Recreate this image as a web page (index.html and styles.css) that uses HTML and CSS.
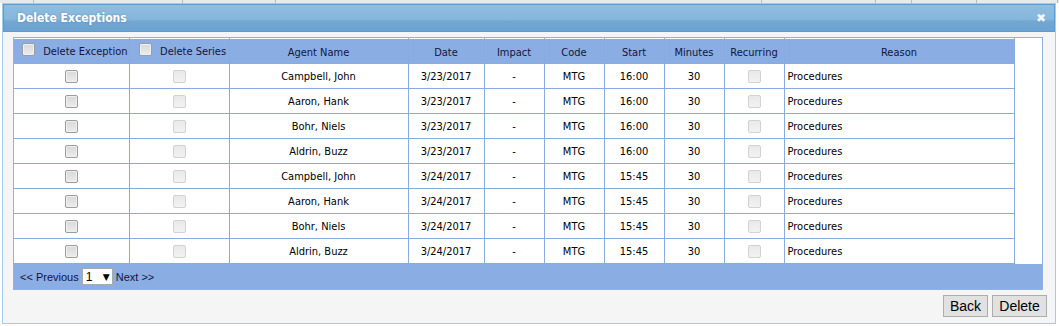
FILE: index.html
```html
<!DOCTYPE html>
<html>
<head>
    <meta charset="UTF-8">
    <title>Delete Exceptions</title>
    <link rel="stylesheet" href="styles.css">
</head>
<body>
    <!-- strip of the page that sits behind the dialog -->
    <div class="backdrop">
        <span style="width:33px"></span><span style="width:148px"></span><span style="width:92px"></span><span style="width:485px"></span><span style="width:113px"></span><span style="width:35px"></span><span style="width:64px"></span><span style="width:80px"></span>
    </div>

    <div class="dialog">
        <div class="titlebar">
            <span class="title">Delete Exceptions</span>
            <span class="close">&#10006;</span>
        </div>

        <div class="content">
            <div class="grid">
                <div class="grid-body">
                    <table class="exceptions">
                        <colgroup>
                            <col style="width:115px">
                            <col style="width:100px">
                            <col style="width:179px">
                            <col style="width:76px">
                            <col style="width:60px">
                            <col style="width:60px">
                            <col style="width:60px">
                            <col style="width:60px">
                            <col style="width:60px">
                            <col style="width:230px">
                        </colgroup>
                        <thead>
                            <tr>
                                <th class="with-check"><input type="checkbox" class="chk"> <span class="hdr-label">Delete Exception</span></th>
                                <th class="with-check"><input type="checkbox" class="chk"> <span class="hdr-label">Delete Series</span></th>
                                <th>Agent Name</th>
                                <th>Date</th>
                                <th>Impact</th>
                                <th>Code</th>
                                <th>Start</th>
                                <th>Minutes</th>
                                <th>Recurring</th>
                                <th>Reason</th>
                            </tr>
                        </thead>
                        <tbody id="rows"></tbody>
                    </table>
                </div>
                <div class="pager">
                    <span>&lt;&lt; Previous</span>
                    <span class="page-select">1 <span class="arrow">&#9660;</span></span>
                    <span>Next &gt;&gt;</span>
                </div>
            </div>

            <div class="actions">
                <button type="button" class="btn btn-back">Back</button>
                <button type="button" class="btn btn-delete">Delete</button>
            </div>
        </div>
    </div>

    <script>
        // rows of the exceptions table
        var rows = [
            ["Campbell, John", "3/23/2017", "16:00"],
            ["Aaron, Hank", "3/23/2017", "16:00"],
            ["Bohr, Niels", "3/23/2017", "16:00"],
            ["Aldrin, Buzz", "3/23/2017", "16:00"],
            ["Campbell, John", "3/24/2017", "15:45"],
            ["Aaron, Hank", "3/24/2017", "15:45"],
            ["Bohr, Niels", "3/24/2017", "15:45"],
            ["Aldrin, Buzz", "3/24/2017", "15:45"]
        ];
        var html = "";
        rows.forEach(function (r) {
            html += "<tr>" +
                "<td><input type='checkbox' class='chk'></td>" +
                "<td><input type='checkbox' class='chk' disabled></td>" +
                "<td>" + r[0] + "</td>" +
                "<td>" + r[1] + "</td>" +
                "<td>-</td>" +
                "<td>MTG</td>" +
                "<td>" + r[2] + "</td>" +
                "<td>30</td>" +
                "<td><input type='checkbox' class='chk' disabled></td>" +
                "<td class='reason'>Procedures</td>" +
                "</tr>";
        });
        document.getElementById("rows").innerHTML = html;
    </script>
</body>
</html>
```

FILE: styles.css
```css
/* page */
body {
    margin: 0;
    padding: 0;
    background-color: #ffffff;
    font-family: "DejaVu Sans Condensed", "Liberation Sans", sans-serif;
    font-size: 11px;
}

/* strip of the page behind the dialog */
.backdrop {
    display: flex;
    height: 3px;
    background-color: #e9e9e9;
}

.backdrop span {
    height: 3px;
    border-right: 1px solid #b9b9b9;
}

/* dialog frame */
.dialog {
    margin: 0 3px 0 2px;
    height: 319px;
    border: 1px solid #a4cbea;
    background-color: #f5f5f5;
    display: flex;
    flex-direction: column;
}

.titlebar {
    height: 26px;
    border: 1px solid #5b9dd2;
    background: linear-gradient(#8fbde0 0%, #86b6dc 55%, #72a8d2 62%, #6aa3cf 100%);
    display: flex;
    align-items: center;
    justify-content: space-between;
    padding: 0 8px 0 13px;
}

.title {
    color: #ffffff;
    font-weight: bold;
    font-size: 12px;
    text-shadow: 0 0 2px rgba(70, 110, 150, 0.6);
}

.close {
    color: #f4f8fc;
    font-size: 12px;
    font-weight: bold;
    font-family: "DejaVu Sans", sans-serif;
}

.content {
    padding: 5px 12px 0 10px;
}

/* grid with the table and the pager */
.grid {
    border: 1px solid #8db2e3;
    background-color: #ffffff;
}

.grid-body {
    background-color: #ffffff;
}

.exceptions {
    border-collapse: collapse;
    table-layout: fixed;
    width: 1000px;
    border-bottom: 1px solid #88acdf;
}

.exceptions th,
.exceptions td {
    border: 1px solid #88acdf;
    height: 24px;
    padding: 0;
    text-align: center;
    vertical-align: middle;
    white-space: nowrap;
}

.exceptions th:first-child,
.exceptions td:first-child {
    border-left: none;
}

.exceptions th {
    background-color: #8aade4;
    color: #14143a;
    font-weight: normal;
    border-top: 1px solid #ffffff;
    padding-top: 2px;
    height: 22px;
}

.exceptions th.with-check {
    padding-left: 7px;
}

.exceptions td {
    color: #000000;
}

.exceptions td.reason {
    text-align: left;
    padding-left: 3px;
}

.hdr-label {
    margin-left: 5px;
}

/* old style checkboxes */
.chk {
    -webkit-appearance: none;
    appearance: none;
    width: 13px;
    height: 13px;
    margin: 0;
    vertical-align: middle;
    border: 1px solid #9c9c9c;
    border-radius: 2px;
    background: linear-gradient(#d8d8d8, #ececec);
    box-shadow: inset 0 0 0 1px #f0f0f0;
}

.chk:disabled {
    border-color: #d2d2d2;
    background: linear-gradient(#e9e9e9, #f2f2f2);
    box-shadow: none;
}

th .chk {
    position: relative;
    top: -3px;
}

/* pager bar */
.pager {
    height: 25px;
    background-color: #8aade4;
    display: flex;
    align-items: center;
    gap: 3px;
    padding-left: 6px;
    font-family: "Liberation Sans", Arial, sans-serif;
    font-size: 11px;
    color: #14143a;
}

.page-select {
    display: inline-flex;
    align-items: center;
    justify-content: space-between;
    box-sizing: border-box;
    width: 31px;
    height: 17px;
    padding: 0 2px 0 3px;
    background-color: #ffffff;
    border: 1px solid #a9a9a9;
    color: #000000;
    font-size: 12px;
}

.page-select .arrow {
    font-size: 9px;
    font-family: "DejaVu Sans", sans-serif;
}

/* buttons */
.actions {
    display: flex;
    justify-content: flex-end;
    gap: 4px;
    margin-top: 5px;
    margin-right: -4px;
}

.btn {
    height: 22px;
    padding: 0;
    background-color: #e1e1e1;
    border: 1px solid #adadad;
    font-family: "Liberation Sans", Arial, sans-serif;
    font-size: 14px;
    color: #000000;
}

.btn-back {
    width: 45px;
}

.btn-delete {
    width: 55px;
}
```
